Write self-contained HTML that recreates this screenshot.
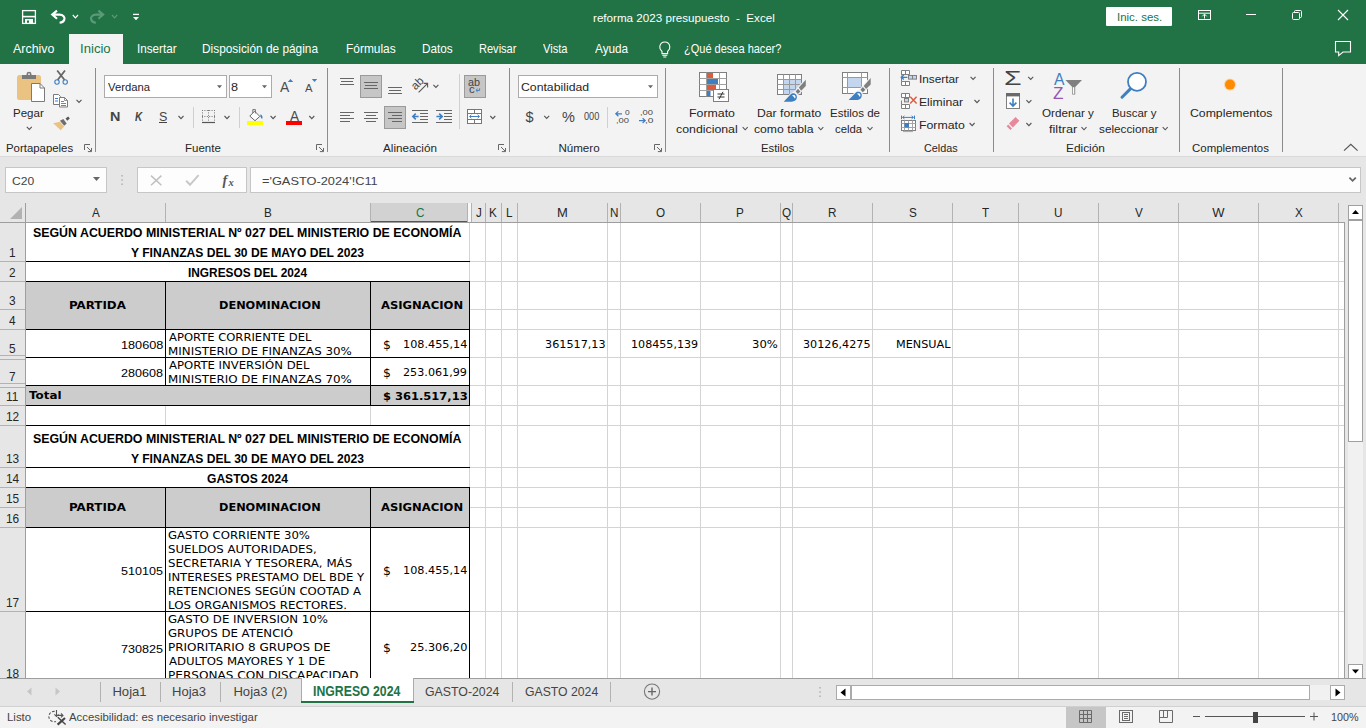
<!DOCTYPE html>
<html lang="es">
<head>
<meta charset="utf-8">
<title>reforma 2023 presupuesto - Excel</title>
<style>
html,body{margin:0;padding:0;}
body{width:1366px;height:728px;position:relative;overflow:hidden;background:#e6e6e6;font-family:"Liberation Sans",sans-serif;}
body div,body span,body svg,body b,body i,body u,body a,body button,body label{position:absolute;}
section,header,footer,main,nav{display:block;}
.t{white-space:pre;transform-origin:0 0;display:block;margin:0;padding:0;border:0;background:none;text-decoration:none;}
svg{left:0;top:0;overflow:visible;}
</style>
</head>
<body>
<header class="titlebar">
<div style="left:0px;top:0px;width:1366px;height:64px;background:#217346;"></div>
<span class="t" style="left:592.91px;top:13px;font:normal normal 11.8px/11.8px 'Liberation Sans', sans-serif;color:#ffffff;transform:scaleX(0.9864);">reforma 2023 presupuesto  -  Excel</span>
<div style="left:1106px;top:7px;width:66px;height:19px;background:#ffffff;border-radius:1px;"></div>
<span class="t" style="left:1116.53px;top:12px;font:normal normal 11.8px/11.8px 'Liberation Sans', sans-serif;color:#217346;transform:scaleX(0.9712);">Inic. ses.</span>
<svg width="1366" height="728" viewBox="0 0 1366 728" fill="none"><rect x="22.6" y="10.6" width="12.8" height="12.8" stroke="#ffffff" stroke-width="1.3"/><path d="M23,16.6 H35" stroke="#ffffff" stroke-width="1.6"/><path d="M25,19 h8 v4.6 h-4 v-3.2 h-2 v3.2 h-2 z" fill="#ffffff"/><path d="M57,10.6 L52.2,14.6 L57,18.8 M52.6,14.6 H59.5 C63.2,14.6 65,17.2 64.4,19.4 C63.8,21.6 61.8,22.6 59.6,22.8" stroke="#ffffff" stroke-width="2.1" stroke-linejoin="miter"/><path d="M72.8,15 l2.6,2.8 l2.6,-2.8" stroke="#ffffff" stroke-width="1.2" fill="none"/><path d="M98.4,10.6 L103.2,14.6 L98.4,18.8 M102.8,14.6 H96 C92.3,14.6 90.5,17.2 91.1,19.4 C91.7,21.6 93.7,22.6 95.9,22.8" stroke="#5c9977" stroke-width="2.1"/><path d="M112,15 l2.6,2.8 l2.6,-2.8" stroke="#5c9977" stroke-width="1.2" fill="none"/><path d="M133,14.4 h6" stroke="#ffffff" stroke-width="1.3"/><polygon points="133,17 139,17 136,20.2" fill="#ffffff"/><rect x="1198.5" y="10.5" width="12" height="9" stroke="#ffffff" stroke-width="1"/><path d="M1198.5,13.2 h12" stroke="#ffffff" stroke-width="1"/><path d="M1204.5,18.5 v-4 M1202.3,16.3 l2.2,-2.2 l2.2,2.2" stroke="#ffffff" stroke-width="1"/><path d="M1246,14.5 h10" stroke="#ffffff" stroke-width="1"/><rect x="1292.5" y="12.5" width="7" height="7" rx="1" stroke="#ffffff" stroke-width="1"/><path d="M1294.5,12 v-0.5 a1,1 0 0 1 1,-1 h5 a1,1 0 0 1 1,1 v5 a1,1 0 0 1 -1,1 h-0.5" stroke="#ffffff" stroke-width="1"/><path d="M1338,10 l10,10 M1348,10 l-10,10" stroke="#ffffff" stroke-width="1.1"/></svg>
</header>
<nav class="tabs">
<div style="left:69px;top:34px;width:54px;height:30px;background:#f3f3f3;"></div>
<span class="t" style="left:13.00px;top:43px;font:normal normal 12.2px/12.2px 'Liberation Sans', sans-serif;color:#ffffff;transform:scaleX(1.0200);">Archivo</span>
<span class="t" style="left:79.81px;top:43px;font:normal normal 12.2px/12.2px 'Liberation Sans', sans-serif;color:#217346;transform:scaleX(1.0782);">Inicio</span>
<span class="t" style="left:136.55px;top:43px;font:normal normal 12.2px/12.2px 'Liberation Sans', sans-serif;color:#ffffff;transform:scaleX(0.9577);">Insertar</span>
<span class="t" style="left:202.43px;top:43px;font:normal normal 12.2px/12.2px 'Liberation Sans', sans-serif;color:#ffffff;transform:scaleX(0.9731);">Disposición de página</span>
<span class="t" style="left:345.62px;top:43px;font:normal normal 12.2px/12.2px 'Liberation Sans', sans-serif;color:#ffffff;transform:scaleX(0.9789);">Fórmulas</span>
<span class="t" style="left:421.64px;top:43px;font:normal normal 12.2px/12.2px 'Liberation Sans', sans-serif;color:#ffffff;transform:scaleX(0.9649);">Datos</span>
<span class="t" style="left:478.69px;top:43px;font:normal normal 12.2px/12.2px 'Liberation Sans', sans-serif;color:#ffffff;transform:scaleX(0.9057);">Revisar</span>
<span class="t" style="left:543.00px;top:43px;font:normal normal 12.2px/12.2px 'Liberation Sans', sans-serif;color:#ffffff;transform:scaleX(0.9139);">Vista</span>
<span class="t" style="left:595.40px;top:43px;font:normal normal 12.2px/12.2px 'Liberation Sans', sans-serif;color:#ffffff;transform:scaleX(0.9655);">Ayuda</span>
<span class="t" style="left:683.97px;top:43px;font:normal normal 12.2px/12.2px 'Liberation Sans', sans-serif;color:#ffffff;transform:scaleX(0.9031);">¿Qué desea hacer?</span>
<svg width="1366" height="728" viewBox="0 0 1366 728" fill="none"><path d="M662,51.5 C660,49.5 659.6,47.5 659.8,46.5 C660.3,43.5 662.5,42 664.8,42 C667.1,42 669.3,43.5 669.8,46.5 C670,47.5 669.6,49.5 667.6,51.5 V53.6 H662 Z" stroke="#ffffff" stroke-width="1.1"/><path d="M662.3,55.3 h5 M663.3,57 h3" stroke="#ffffff" stroke-width="1"/><path d="M1335.5,41.5 h15 v10.5 h-7.5 l-4.3,3.6 v-3.6 h-3.2 z" stroke="#ffffff" stroke-width="1.1" stroke-linejoin="miter"/></svg>
</nav>
<section class="ribbon">
<div style="left:0px;top:64px;width:1366px;height:92px;background:#f3f3f3;"></div>
<div style="left:0px;top:156px;width:1366px;height:1px;background:#dadada;"></div>
<div style="left:95px;top:68px;width:1px;height:84px;background:#8c8c8c;"></div>
<div style="left:327px;top:68px;width:1px;height:84px;background:#8c8c8c;"></div>
<div style="left:509px;top:68px;width:1px;height:84px;background:#8c8c8c;"></div>
<div style="left:665px;top:68px;width:1px;height:84px;background:#8c8c8c;"></div>
<div style="left:889px;top:68px;width:1px;height:84px;background:#8c8c8c;"></div>
<div style="left:993px;top:68px;width:1px;height:84px;background:#8c8c8c;"></div>
<div style="left:1179px;top:68px;width:1px;height:84px;background:#8c8c8c;"></div>
<div style="left:1282px;top:68px;width:1px;height:84px;background:#8c8c8c;"></div>
<div style="left:193px;top:107px;width:1px;height:21px;background:#d0d0d0;"></div>
<div style="left:239px;top:107px;width:1px;height:21px;background:#d0d0d0;"></div>
<div style="left:607px;top:107px;width:1px;height:21px;background:#d0d0d0;"></div>
<div style="left:459px;top:74px;width:1px;height:55px;background:#d0d0d0;"></div>
<span class="t" style="left:5.72px;top:142px;font:normal normal 11.6px/11.6px 'Liberation Sans', sans-serif;color:#262626;transform:scaleX(0.9827);">Portapapeles</span>
<span class="t" style="left:185.11px;top:142px;font:normal normal 11.6px/11.6px 'Liberation Sans', sans-serif;color:#262626;transform:scaleX(0.9924);">Fuente</span>
<span class="t" style="left:383.40px;top:142px;font:normal normal 11.6px/11.6px 'Liberation Sans', sans-serif;color:#262626;transform:scaleX(1.0081);">Alineación</span>
<span class="t" style="left:558.40px;top:142px;font:normal normal 11.6px/11.6px 'Liberation Sans', sans-serif;color:#262626;">Número</span>
<span class="t" style="left:760.72px;top:142px;font:normal normal 11.6px/11.6px 'Liberation Sans', sans-serif;color:#262626;transform:scaleX(0.9737);">Estilos</span>
<span class="t" style="left:924.03px;top:142px;font:normal normal 11.6px/11.6px 'Liberation Sans', sans-serif;color:#262626;transform:scaleX(0.9344);">Celdas</span>
<span class="t" style="left:1066.48px;top:142px;font:normal normal 11.6px/11.6px 'Liberation Sans', sans-serif;color:#262626;transform:scaleX(1.0249);">Edición</span>
<span class="t" style="left:1191.91px;top:142px;font:normal normal 11.6px/11.6px 'Liberation Sans', sans-serif;color:#262626;transform:scaleX(0.9869);">Complementos</span>
<span class="t" style="left:13.41px;top:107px;font:normal normal 11.6px/11.6px 'Liberation Sans', sans-serif;color:#262626;transform:scaleX(0.9936);">Pegar</span>
<div style="left:104px;top:75px;width:123px;height:23px;background:#ffffff;border:1px solid #ababab;box-sizing:border-box;"></div>
<span class="t" style="left:107.60px;top:81px;font:normal normal 11.6px/11.6px 'Liberation Sans', sans-serif;color:#262626;transform:scaleX(0.9708);">Verdana</span>
<div style="left:229px;top:75px;width:43px;height:23px;background:#ffffff;border:1px solid #ababab;box-sizing:border-box;"></div>
<span class="t" style="left:231.45px;top:81px;font:normal normal 11.6px/11.6px 'Liberation Sans', sans-serif;color:#262626;transform:scaleX(1.0909);">8</span>
<span class="t" style="left:109.54px;top:111px;font:normal bold 12px/12px 'Liberation Sans', sans-serif;color:#444;transform:scaleX(1.1972);">N</span>
<span class="t" style="left:134.53px;top:111px;font:italic bold 12px/12px 'Liberation Sans', sans-serif;color:#444;transform:scaleX(0.8261);">K</span>
<span class="t" style="left:158.78px;top:111px;font:normal normal 12px/12px 'Liberation Sans', sans-serif;color:#444;transform:scaleX(1.0429);">S</span>
<div style="left:159px;top:122px;width:8px;height:1px;background:#444;"></div>
<div style="left:360px;top:75px;width:22px;height:23px;background:#c6c6c6;border:1px solid #9a9a9a;box-sizing:border-box;"></div>
<div style="left:384px;top:106px;width:22px;height:23px;background:#c6c6c6;border:1px solid #9a9a9a;box-sizing:border-box;"></div>
<div style="left:464px;top:75px;width:22px;height:23px;background:#c6c6c6;border:1px solid #9a9a9a;box-sizing:border-box;"></div>
<div style="left:518px;top:75px;width:140px;height:23px;background:#ffffff;border:1px solid #ababab;box-sizing:border-box;"></div>
<span class="t" style="left:521.17px;top:81px;font:normal normal 11.6px/11.6px 'Liberation Sans', sans-serif;color:#262626;transform:scaleX(1.0562);">Contabilidad</span>
<span class="t" style="left:525.50px;top:110px;font:normal normal 14.5px/14.5px 'Liberation Sans', sans-serif;color:#444;">$</span>
<span class="t" style="left:562.29px;top:110px;font:normal normal 14px/14px 'Liberation Sans', sans-serif;color:#444;transform:scaleX(1.0345);">%</span>
<span class="t" style="left:584.32px;top:112px;font:normal normal 10px/10px 'Liberation Sans', sans-serif;color:#444;transform:scaleX(0.9174);">000</span>
<span class="t" style="left:689.24px;top:107px;font:normal normal 11.6px/11.6px 'Liberation Sans', sans-serif;color:#262626;transform:scaleX(1.0636);">Formato</span>
<span class="t" style="left:676.27px;top:123px;font:normal normal 11.6px/11.6px 'Liberation Sans', sans-serif;color:#262626;transform:scaleX(1.0639);">condicional</span>
<span class="t" style="left:757.45px;top:107px;font:normal normal 11.6px/11.6px 'Liberation Sans', sans-serif;color:#262626;transform:scaleX(1.0503);">Dar formato</span>
<span class="t" style="left:754.18px;top:123px;font:normal normal 11.6px/11.6px 'Liberation Sans', sans-serif;color:#262626;transform:scaleX(1.0498);">como tabla</span>
<span class="t" style="left:829.60px;top:107px;font:normal normal 11.6px/11.6px 'Liberation Sans', sans-serif;color:#262626;transform:scaleX(0.9951);">Estilos de</span>
<span class="t" style="left:835.31px;top:123px;font:normal normal 11.6px/11.6px 'Liberation Sans', sans-serif;color:#262626;transform:scaleX(0.9788);">celda</span>
<span class="t" style="left:918.98px;top:73px;font:normal normal 11.6px/11.6px 'Liberation Sans', sans-serif;color:#262626;transform:scaleX(1.0167);">Insertar</span>
<span class="t" style="left:919.05px;top:96px;font:normal normal 11.6px/11.6px 'Liberation Sans', sans-serif;color:#262626;transform:scaleX(1.0506);">Eliminar</span>
<span class="t" style="left:919.04px;top:119px;font:normal normal 11.6px/11.6px 'Liberation Sans', sans-serif;color:#262626;transform:scaleX(1.0613);">Formato</span>
<span class="t" style="left:1042.10px;top:107px;font:normal normal 11.6px/11.6px 'Liberation Sans', sans-serif;color:#262626;transform:scaleX(1.0063);">Ordenar y</span>
<span class="t" style="left:1048.89px;top:123px;font:normal normal 11.6px/11.6px 'Liberation Sans', sans-serif;color:#262626;transform:scaleX(1.0974);">filtrar</span>
<span class="t" style="left:1111.51px;top:107px;font:normal normal 11.6px/11.6px 'Liberation Sans', sans-serif;color:#262626;transform:scaleX(0.9859);">Buscar y</span>
<span class="t" style="left:1098.70px;top:123px;font:normal normal 11.6px/11.6px 'Liberation Sans', sans-serif;color:#262626;transform:scaleX(1.0136);">seleccionar</span>
<span class="t" style="left:1189.77px;top:107px;font:normal normal 11.6px/11.6px 'Liberation Sans', sans-serif;color:#262626;transform:scaleX(1.0569);">Complementos</span>
<span class="t" style="left:280.40px;top:80px;font:normal normal 14.5px/14.5px 'Liberation Sans', sans-serif;color:#4c4c4c;transform:scaleX(0.9588);">A</span>
<span class="t" style="left:305.20px;top:83px;font:normal normal 11px/11px 'Liberation Sans', sans-serif;color:#4c4c4c;transform:scaleX(1.0270);">A</span>
<span class="t" style="left:289.70px;top:109px;font:normal normal 14px/14px 'Liberation Sans', sans-serif;color:#4c4c4c;transform:scaleX(0.9681);">A</span>
<span class="t" style="left:468.38px;top:78px;font:normal normal 10.4px/10.4px 'Liberation Sans', sans-serif;color:#444;transform:scaleX(1.0386);">ab</span>
<span class="t" style="left:468.77px;top:85px;font:normal normal 10.4px/10.4px 'Liberation Sans', sans-serif;color:#444;transform:scaleX(1.0870);">c</span>
<span class="t" style="left:1003.61px;top:67px;font:normal normal 21px/21px 'Liberation Sans', sans-serif;color:#444;transform:scaleX(1.3514);">Σ</span>
<span class="t" style="left:1053.50px;top:72px;font:normal normal 16px/16px 'Liberation Sans', sans-serif;color:#3f7fc1;transform:scaleX(0.9813);">A</span>
<span class="t" style="left:1053.47px;top:86px;font:normal normal 16px/16px 'Liberation Sans', sans-serif;color:#9455b5;transform:scaleX(1.0682);">Z</span>
<span class="t" style="left:717.20px;top:90px;font:normal normal 12px/12px 'Liberation Sans', sans-serif;color:#333;transform:scaleX(1.3333);">≠</span>
<span class="t" style="left:624.58px;top:109px;font:normal normal 7.6px/7.6px 'Liberation Sans', sans-serif;color:#444;transform:scaleX(1.1053);">0</span>
<span class="t" style="left:616.26px;top:117px;font:normal normal 7.6px/7.6px 'Liberation Sans', sans-serif;color:#444;transform:scaleX(1.2323);">,00</span>
<span class="t" style="left:640.26px;top:109px;font:normal normal 7.6px/7.6px 'Liberation Sans', sans-serif;color:#444;transform:scaleX(1.2323);">,00</span>
<span class="t" style="left:644.79px;top:117px;font:normal normal 7.6px/7.6px 'Liberation Sans', sans-serif;color:#444;transform:scaleX(1.3426);">,0</span>
<svg width="1366" height="728" viewBox="0 0 1366 728" fill="none"><rect x="17" y="75" width="24" height="25" rx="2.5" fill="#eac282"/><rect x="22" y="75" width="14" height="4" fill="#7a7a7a"/><path d="M26.5,75.2 v-1.2 a2.5,2.2 0 0 1 5,0 v1.2 z" fill="#7a7a7a"/><circle cx="29" cy="74.2" r="0.9" fill="#f3f3f3"/><path d="M31.5,83.5 h8.5 l4.5,4.5 v13.5 h-13 z" fill="#fff" stroke="#7a7a7a" stroke-width="1"/><path d="M40,83.5 v4.5 h4.5" stroke="#7a7a7a" stroke-width="1"/><path d="M26.8,126.8 l2.5,2.6 l2.5,-2.6" stroke="#555" stroke-width="1.1" fill="none"/><path d="M57.2,70.5 L64.6,80 M65,70.5 L57.6,80" stroke="#666" stroke-width="1.8"/><circle cx="57" cy="82" r="2.2" stroke="#3f7fc1" stroke-width="1.1"/><circle cx="65.2" cy="82" r="2.2" stroke="#3f7fc1" stroke-width="1.1"/><path d="M53.5,94.5 h5 l2,2 v8 h-7 z" fill="#fff" stroke="#7a7a7a"/><path d="M55,98.5 h3 M55,101 h3" stroke="#3f7fc1"/><path d="M59.5,97.5 h5 l3,3 v6.5 h-8 z" fill="#fff" stroke="#7a7a7a"/><path d="M64.5,97.5 v3 h3" stroke="#7a7a7a" stroke-width="0.8"/><path d="M61,101.5 h3 M61,103.5 h5 M61,105.5 h5" stroke="#3f7fc1" stroke-width="0.9"/><path d="M76.5,99.8 l2.5,2.6 l2.5,-2.6" stroke="#555" stroke-width="1.1" fill="none"/><path d="M65.6,118.6 l2.6,-2 l1.6,1.8 l-2.6,2.4 z" fill="#555"/><path d="M59.9,120.8 l3.4,-1.8 l3.4,4.6 l-2.5,2.2 z" fill="#6e6e6e"/><path d="M53.2,123.2 l6.7,-1.4 l4.3,4.6 l-3.5,3.8 z" fill="#eac282"/><path d="M84.5,150 v-5.5 h5.5" stroke="#666" stroke-width="1"/><path d="M87,147 l4.2,4.2 M91.5,148 v3.6 h-3.6" stroke="#666" stroke-width="1"/><path d="M178.5,116 l2.5,2.6 l2.5,-2.6" stroke="#555" stroke-width="1.1" fill="none"/><polygon points="217,85.3 222,85.3 219.5,88.3" fill="#666"/><polygon points="262,85.3 267,85.3 264.5,88.3" fill="#666"/><polygon points="287.8,82 293.2,82 290.5,79" fill="#3f7fc1"/><polygon points="311.8,79 317.2,79 314.5,82" fill="#3f7fc1"/><path d="M202,110.5 h13 M202,116.5 h13 M202.5,110 v11 M208.5,110 v11 M214.5,110 v11 " stroke="#777" stroke-width="1" stroke-dasharray="1 1.4"/><path d="M202,122.5 h13" stroke="#555" stroke-width="1.2"/><path d="M224.5,116 l2.5,2.6 l2.5,-2.6" stroke="#555" stroke-width="1.1" fill="none"/><rect x="247" y="121" width="16" height="4" fill="#ffff00"/><path d="M254.6,111.2 l5.2,5.2 l-4.8,4.3 l-5.2,-4.6 z" fill="#fff" stroke="#666" stroke-width="1"/><path d="M252.8,113 v-3.4 h2.6 v3.8" stroke="#666" stroke-width="0.9"/><path d="M260.5,114.2 c1.8,0.8 2.6,2.6 1.6,5 l-1.8,-2.6 z" fill="#3f7fc1"/><path d="M270.6,116 l2.5,2.6 l2.5,-2.6" stroke="#555" stroke-width="1.1" fill="none"/><rect x="286" y="121" width="16" height="4" fill="#ff0000"/><path d="M309.3,116 l2.5,2.6 l2.5,-2.6" stroke="#555" stroke-width="1.1" fill="none"/><path d="M316.5,150 v-5.5 h5.5" stroke="#666" stroke-width="1"/><path d="M319,147 l4.2,4.2 M323.5,148 v3.6 h-3.6" stroke="#666" stroke-width="1"/></svg><svg width="1366" height="728" viewBox="0 0 1366 728" fill="none"><path d="M340,78.5 H354 M341,81.5 H353 M340,84.5 H354 M364,82.5 H378 M365,85.5 H377 M364,88.5 H378 M388,87.5 H402 M389,90.5 H401 M388,93.5 H402 M340,112.5 H354 M340,115.5 H350 M340,118.5 H354 M340,121.5 H350 M364,112.5 H378 M366,115.5 H376 M364,118.5 H378 M366,121.5 H376 M388,112.5 H402 M392,115.5 H402 M388,118.5 H402 M392,121.5 H402 M412,110.5 H428 M420,113.5 H428 M420,116.5 H428 M420,119.5 H428 M412,122.5 H428 M436,110.5 H452 M444,113.5 H452 M444,116.5 H452 M444,119.5 H452 M436,122.5 H452 " stroke="#666" stroke-width="1"/><path d="M418.6,116.5 h-5.6 M415.8,113.6 l-3,2.9 l3,2.9" stroke="#3f7fc1" stroke-width="1.6"/><path d="M436.4,116.5 h5.6 M439.2,113.6 l3,2.9 l-3,2.9" stroke="#3f7fc1" stroke-width="1.6"/><text x="0" y="0" transform="translate(415.6,90.6) rotate(-45)" font-family="'Liberation Sans',sans-serif" font-size="11.5" fill="#444">ab</text><path d="M418.6,92.4 L427.4,83.6 M423.6,83.4 h4 v4" stroke="#555" stroke-width="1.1"/><path d="M433.4,84.8 l2.5,2.6 l2.5,-2.6" stroke="#555" stroke-width="1.1" fill="none"/><path d="M479.6,88.4 v2 h-3.4 M477.6,88.9 l-1.6,1.5 l1.6,1.5" stroke="#3f7fc1" stroke-width="1"/><rect x="467.5" y="109.5" width="14" height="14" fill="#fff" stroke="#777"/><path d="M467.5,113.5 h14 M467.5,119.5 h14 M474.5,109.5 v4 M474.5,119.5 v4" stroke="#777"/><path d="M469.6,116.5 h9.8 M471.4,114.8 l-1.8,1.7 l1.8,1.7 M477.6,114.8 l1.8,1.7 l-1.8,1.7" stroke="#3f7fc1" stroke-width="1"/><path d="M490.3,116 l2.5,2.6 l2.5,-2.6" stroke="#555" stroke-width="1.1" fill="none"/><path d="M498.5,150 v-5.5 h5.5" stroke="#666" stroke-width="1"/><path d="M501,147 l4.2,4.2 M505.5,148 v3.6 h-3.6" stroke="#666" stroke-width="1"/><polygon points="648,85.3 653,85.3 650.5,88.3" fill="#666"/><path d="M544.2,115.9 l2.5,2.6 l2.5,-2.6" stroke="#555" stroke-width="1.1" fill="none"/><path d="M622,113.8 h-6.2 M618.4,111.4 l-2.6,2.4 l2.6,2.4" stroke="#3f7fc1" stroke-width="1.2"/><path d="M639,120.6 h6.2 M642.6,118.2 l2.6,2.4 l-2.6,2.4" stroke="#3f7fc1" stroke-width="1.2"/><path d="M654.5,150 v-5.5 h5.5" stroke="#666" stroke-width="1"/><path d="M657,147 l4.2,4.2 M661.5,148 v3.6 h-3.6" stroke="#666" stroke-width="1"/></svg><svg width="1366" height="728" viewBox="0 0 1366 728" fill="none"><rect x="699.5" y="72.5" width="27" height="24" fill="#fff" stroke="#7f7f7f"/><path d="M706.5,72.5 v24 M719.5,72.5 v24 M699.5,78.5 h27 M699.5,84.5 h27 M699.5,90.5 h27" stroke="#a0a0a0"/><rect x="707" y="73" width="6" height="5" fill="#dc5b3e"/><rect x="707" y="79" width="11" height="5" fill="#3f7fc1"/><rect x="707" y="85" width="9" height="5" fill="#dc5b3e"/><rect x="707" y="91" width="3.5" height="5" fill="#3f7fc1"/><rect x="713.5" y="89.5" width="15" height="12" fill="#fff" stroke="#7f7f7f"/><path d="M717.5,94 h7 M717.5,97 h7 M723,91.8 l-4,7.4" stroke="#333" stroke-width="1"/><path d="M742.7,127.2 l2.5,2.6 l2.5,-2.6" stroke="#555" stroke-width="1.1" fill="none"/><rect x="777.5" y="74.5" width="24" height="20" fill="#fff" stroke="#7f7f7f"/><rect x="784" y="80" width="17" height="14" fill="#c3d6ee"/><path d="M783.5,74.5 v20 M789.5,74.5 v20 M795.5,74.5 v20 M777.5,79.5 h24 M777.5,84.5 h24 M777.5,89.5 h24" stroke="#9a9a9a"/><g transform="translate(0,0)"><path d="M805.8,79.7 V86.1 L801,91 L797.8,93.9 L796,94.4 C797.6,96.4 797,99.2 795.2,100.6 C793.8,101.6 792,101.8 790,101.8 H783.7 L790.5,94.6 L795.4,91.6 L798.6,87.7 Z" fill="#f3f3f3" stroke="#f3f3f3" stroke-width="2" stroke-linejoin="round"/><path d="M805.8,79.7 V86.1 L801.2,90.8 L798.8,87.6 Z" fill="#808080"/><path d="M795.6,91.4 L798,88.8 L800.4,91.4 L797.9,93.9 Z" fill="#7a7a7a"/><path d="M783.7,101.7 L790.5,94.6 C791.6,93.2 794.6,92.8 796,94.4 C797.6,96.4 797,99.2 795.2,100.6 C793.8,101.6 792,101.8 790,101.8 Z" fill="#3f7fc1"/><path d="M792.2,95.4 c1.3,-0.8 2.8,-0.4 3.2,0.9 c0.3,1 0,1.9 -0.5,2.4 c-0.4,-1.4 -1.4,-2.5 -2.7,-3.3 z" fill="#fff"/></g><path d="M818.3,127.2 l2.5,2.6 l2.5,-2.6" stroke="#555" stroke-width="1.1" fill="none"/><rect x="842.5" y="72.5" width="25" height="21" fill="#fff" stroke="#7f7f7f"/><path d="M847.5,72.5 v21 M861.5,72.5 v21 M842.5,77.5 h25 M842.5,87.5 h25" stroke="#9a9a9a"/><rect x="848" y="78" width="13" height="9" fill="#c3d6ee"/><g transform="translate(64.9,-1.7)"><path d="M805.8,79.7 V86.1 L801,91 L797.8,93.9 L796,94.4 C797.6,96.4 797,99.2 795.2,100.6 C793.8,101.6 792,101.8 790,101.8 H783.7 L790.5,94.6 L795.4,91.6 L798.6,87.7 Z" fill="#f3f3f3" stroke="#f3f3f3" stroke-width="2" stroke-linejoin="round"/><path d="M805.8,79.7 V86.1 L801.2,90.8 L798.8,87.6 Z" fill="#808080"/><path d="M795.6,91.4 L798,88.8 L800.4,91.4 L797.9,93.9 Z" fill="#7a7a7a"/><path d="M783.7,101.7 L790.5,94.6 C791.6,93.2 794.6,92.8 796,94.4 C797.6,96.4 797,99.2 795.2,100.6 C793.8,101.6 792,101.8 790,101.8 Z" fill="#3f7fc1"/><path d="M792.2,95.4 c1.3,-0.8 2.8,-0.4 3.2,0.9 c0.3,1 0,1.9 -0.5,2.4 c-0.4,-1.4 -1.4,-2.5 -2.7,-3.3 z" fill="#fff"/></g><path d="M867.5,127.2 l2.5,2.6 l2.5,-2.6" stroke="#555" stroke-width="1.1" fill="none"/><path d="M901.5,70.5 h8 v4 h-8 z M905.5,70.5 v4 M901.5,81.5 h8 v4 h-8 z M905.5,81.5 v4 M901.5,77.5 v4 M901.5,74.5 v1" stroke="#7f7f7f" fill="#fff"/><rect x="908.5" y="75.5" width="8" height="3.6" fill="#c3d6ee" stroke="#7f7f7f"/><path d="M912.5,75.5 v3.6" stroke="#7f7f7f"/><path d="M907.4,77.3 h-6 M903.8,75 l-2.6,2.3 l2.6,2.3" stroke="#3f7fc1" stroke-width="1.3"/><path d="M970.6,76.9 l2.5,2.6 l2.5,-2.6" stroke="#555" stroke-width="1.1" fill="none"/><path d="M901.5,93.5 h8 v4 h-8 z M905.5,93.5 v4 M901.5,104.5 h8 v4 h-8 z M905.5,104.5 v4 M901.5,100.5 v4" stroke="#7f7f7f" fill="#fff"/><rect x="904.5" y="98.5" width="4" height="3.4" fill="#c3d6ee" stroke="#7f7f7f"/><path d="M910.2,96.8 l6.4,6.8 M916.6,96.8 l-6.4,6.8" stroke="#dc5b3e" stroke-width="1.4"/><path d="M974.5,100 l2.5,2.6 l2.5,-2.6" stroke="#555" stroke-width="1.1" fill="none"/><path d="M901.5,115.6 v3.6 M914.5,115.6 v3.6 M902.6,117.4 h10.8 M904.4,115.9 l-1.8,1.5 l1.8,1.5 M911.6,115.9 l1.8,1.5 l-1.8,1.5" stroke="#3f7fc1" stroke-width="1"/><rect x="901.5" y="120.5" width="14" height="10" fill="#fff" stroke="#7f7f7f"/><path d="M901.5,123.5 h14 M901.5,127.5 h14 M904.5,120.5 v10 M908.5,120.5 v10 M912.5,120.5 v10" stroke="#a6a6a6"/><rect x="904.5" y="123" width="4.5" height="4.5" fill="#3f7fc1"/><path d="M903,131.6 h10" stroke="#a6a6a6"/><path d="M969.6,123 l2.5,2.6 l2.5,-2.6" stroke="#555" stroke-width="1.1" fill="none"/><path d="M1028.2,76.9 l2.5,2.6 l2.5,-2.6" stroke="#555" stroke-width="1.1" fill="none"/><path d="M1026.4,100.1 l2.5,2.6 l2.5,-2.6" stroke="#555" stroke-width="1.1" fill="none"/><path d="M1026.4,123 l2.5,2.6 l2.5,-2.6" stroke="#555" stroke-width="1.1" fill="none"/><rect x="1006.5" y="93.5" width="13" height="15" fill="#fff" stroke="#7f7f7f"/><rect x="1006" y="93" width="14" height="3.4" fill="#6a6a6a"/><path d="M1013,98.4 v7.4 M1009.6,102.6 l3.4,3.4 l3.4,-3.4" stroke="#3f7fc1" stroke-width="1.6"/><path d="M1015.6,117 l3.8,3.8 l-6.6,6.6 l-3.8,-3.8 z" fill="#e8889b"/><path d="M1008.2,124.6 l3.8,3.8 l-1.6,1.6 l-3.8,-3.8 z" fill="#e8889b"/><path d="M1065.4,80 h16.6 l-6.8,7 v7.6 h-3 v-7.6 z" fill="#808080"/><rect x="1072.9" y="87.2" width="1.4" height="6.6" fill="#fff"/><path d="M1081.5,127.2 l2.5,2.6 l2.5,-2.6" stroke="#555" stroke-width="1.1" fill="none"/><path d="M1130.6,88.6 L1122,97.2" stroke="#3f7fc1" stroke-width="3" stroke-linecap="round"/><circle cx="1137" cy="81.8" r="9" fill="#fff" stroke="#3f7fc1" stroke-width="1.8"/><path d="M1162.7,127.2 l2.5,2.6 l2.5,-2.6" stroke="#555" stroke-width="1.1" fill="none"/><circle cx="1230" cy="84.6" r="5" fill="#ff8c00"/><circle cx="1230" cy="84.6" r="6.2" fill="#ff8c00" opacity="0.25"/><path d="M1344,150.6 l6.8,-6.4 l6.8,6.4" stroke="#555" stroke-width="1.2"/></svg>
</section>
<section class="formulabar">
<div style="left:5px;top:167px;width:102px;height:26px;background:#fdfdfd;border:1px solid #c6c6c6;box-sizing:border-box;"></div>
<span class="t" style="left:11.79px;top:176px;font:normal normal 11.8px/11.8px 'Liberation Sans', sans-serif;color:#444;transform:scaleX(1.0249);">C20</span>
<div style="left:137px;top:167px;width:110px;height:26px;background:#fdfdfd;border:1px solid #c6c6c6;box-sizing:border-box;"></div>
<div style="left:250px;top:167px;width:1111px;height:26px;background:#fdfdfd;border:1px solid #c6c6c6;box-sizing:border-box;"></div>
<span class="t" style="left:261.86px;top:176px;font:normal normal 11.8px/11.8px 'Liberation Sans', sans-serif;color:#444;transform:scaleX(1.0847);">=&#x27;GASTO-2024&#x27;!C11</span>
<span class="t" style="left:222.60px;top:174px;font:italic bold 14px/14px 'Liberation Serif', serif;color:#555;">f</span>
<span class="t" style="left:228.40px;top:178px;font:italic bold 10.5px/10.5px 'Liberation Serif', serif;color:#555;">x</span>
<svg width="1366" height="728" viewBox="0 0 1366 728" fill="none"><polygon points="93,177 100,177 96.5,181" fill="#666"/><path d="M121.3,175 h1.6 v1.6 h-1.6 z M121.3,179.2 h1.6 v1.6 h-1.6 z M121.3,183.4 h1.6 v1.6 h-1.6 z" fill="#b4b4b4"/><path d="M151,175.6 l10.4,9.6 M161.4,175.6 l-10.4,9.6" stroke="#c0c0c0" stroke-width="1.5"/><path d="M186.2,180.8 l3.8,4 l8.6,-9.6" stroke="#c8c8c8" stroke-width="2"/><path d="M1349.4,177.6 l3.2,3.2 l3.2,-3.2" stroke="#666" stroke-width="1.8"/></svg>
</section>
<main class="grid">
<div style="left:26px;top:223px;width:1318px;height:455px;background:#ffffff;"></div>
<div style="left:469px;top:223px;width:1px;height:455px;background:#d4d4d4;"></div>
<div style="left:485px;top:223px;width:1px;height:455px;background:#d4d4d4;"></div>
<div style="left:501px;top:223px;width:1px;height:455px;background:#d4d4d4;"></div>
<div style="left:517px;top:223px;width:1px;height:455px;background:#d4d4d4;"></div>
<div style="left:607px;top:223px;width:1px;height:455px;background:#d4d4d4;"></div>
<div style="left:620px;top:223px;width:1px;height:455px;background:#d4d4d4;"></div>
<div style="left:700px;top:223px;width:1px;height:455px;background:#d4d4d4;"></div>
<div style="left:780px;top:223px;width:1px;height:455px;background:#d4d4d4;"></div>
<div style="left:792px;top:223px;width:1px;height:455px;background:#d4d4d4;"></div>
<div style="left:872px;top:223px;width:1px;height:455px;background:#d4d4d4;"></div>
<div style="left:952px;top:223px;width:1px;height:455px;background:#d4d4d4;"></div>
<div style="left:1018px;top:223px;width:1px;height:455px;background:#d4d4d4;"></div>
<div style="left:1098px;top:223px;width:1px;height:455px;background:#d4d4d4;"></div>
<div style="left:1178px;top:223px;width:1px;height:455px;background:#d4d4d4;"></div>
<div style="left:1258px;top:223px;width:1px;height:455px;background:#d4d4d4;"></div>
<div style="left:1338px;top:223px;width:1px;height:455px;background:#d4d4d4;"></div>
<div style="left:470px;top:261px;width:874px;height:1px;background:#d4d4d4;"></div>
<div style="left:470px;top:281px;width:874px;height:1px;background:#d4d4d4;"></div>
<div style="left:470px;top:309px;width:874px;height:1px;background:#d4d4d4;"></div>
<div style="left:470px;top:329px;width:874px;height:1px;background:#d4d4d4;"></div>
<div style="left:470px;top:357px;width:874px;height:1px;background:#d4d4d4;"></div>
<div style="left:470px;top:385px;width:874px;height:1px;background:#d4d4d4;"></div>
<div style="left:470px;top:405px;width:874px;height:1px;background:#d4d4d4;"></div>
<div style="left:470px;top:425px;width:874px;height:1px;background:#d4d4d4;"></div>
<div style="left:470px;top:467px;width:874px;height:1px;background:#d4d4d4;"></div>
<div style="left:470px;top:487px;width:874px;height:1px;background:#d4d4d4;"></div>
<div style="left:470px;top:507px;width:874px;height:1px;background:#d4d4d4;"></div>
<div style="left:470px;top:527px;width:874px;height:1px;background:#d4d4d4;"></div>
<div style="left:470px;top:611px;width:874px;height:1px;background:#d4d4d4;"></div>
<div style="left:165px;top:406px;width:1px;height:19px;background:#d4d4d4;"></div>
<div style="left:370px;top:406px;width:1px;height:19px;background:#d4d4d4;"></div>
<div style="left:26px;top:282px;width:443px;height:47px;background:#cccccc;"></div>
<div style="left:26px;top:386px;width:443px;height:19px;background:#cccccc;"></div>
<div style="left:26px;top:488px;width:443px;height:39px;background:#cccccc;"></div>
<div style="left:26px;top:261px;width:444px;height:1px;background:#000000;"></div>
<div style="left:26px;top:281px;width:444px;height:1px;background:#000000;"></div>
<div style="left:26px;top:329px;width:444px;height:1px;background:#000000;"></div>
<div style="left:26px;top:357px;width:444px;height:1px;background:#000000;"></div>
<div style="left:26px;top:385px;width:444px;height:1px;background:#000000;"></div>
<div style="left:26px;top:405px;width:444px;height:1px;background:#000000;"></div>
<div style="left:26px;top:425px;width:444px;height:1px;background:#000000;"></div>
<div style="left:26px;top:467px;width:444px;height:1px;background:#000000;"></div>
<div style="left:26px;top:487px;width:444px;height:1px;background:#000000;"></div>
<div style="left:26px;top:527px;width:444px;height:1px;background:#000000;"></div>
<div style="left:26px;top:611px;width:444px;height:1px;background:#000000;"></div>
<div style="left:165px;top:281px;width:1px;height:105px;background:#000000;"></div>
<div style="left:165px;top:487px;width:1px;height:191px;background:#000000;"></div>
<div style="left:370px;top:281px;width:1px;height:125px;background:#000000;"></div>
<div style="left:370px;top:487px;width:1px;height:191px;background:#000000;"></div>
<div style="left:469px;top:281px;width:1px;height:125px;background:#000000;"></div>
<div style="left:469px;top:487px;width:1px;height:191px;background:#000000;"></div>
<div style="left:370px;top:385px;width:1px;height:21px;background:#000000;"></div>
<div style="left:0px;top:203px;width:1344px;height:19px;background:#e6e6e6;"></div>
<div style="left:371px;top:203px;width:97px;height:18px;background:#d2d2d2;"></div>
<div style="left:371px;top:221px;width:97px;height:2px;background:#217346;"></div>
<div style="left:0px;top:222px;width:1345px;height:1px;background:#9e9e9e;"></div>
<div style="left:25px;top:203px;width:1px;height:475px;background:#9e9e9e;"></div>
<div style="left:1344px;top:222px;width:1px;height:457px;background:#9e9e9e;"></div>
<div style="left:0px;top:223px;width:25px;height:455px;background:#e6e6e6;"></div>
<div style="left:165px;top:203px;width:1px;height:19px;background:#b2b2b2;"></div>
<span class="t" style="left:91.58px;top:206px;font:normal normal 13px/13px 'Liberation Sans', sans-serif;color:#262626;transform:scaleX(0.9000);">A</span>
<div style="left:370px;top:203px;width:1px;height:19px;background:#b2b2b2;"></div>
<span class="t" style="left:263.95px;top:206px;font:normal normal 13px/13px 'Liberation Sans', sans-serif;color:#262626;transform:scaleX(0.9000);">B</span>
<div style="left:467px;top:203px;width:1px;height:19px;background:#b2b2b2;"></div>
<div style="left:468px;top:203px;width:3px;height:19px;background:#f8f8f8;"></div>
<div style="left:471px;top:203px;width:1px;height:19px;background:#b2b2b2;"></div>
<span class="t" style="left:415.73px;top:206px;font:normal normal 13px/13px 'Liberation Sans', sans-serif;color:#217346;transform:scaleX(0.9000);">C</span>
<div style="left:485px;top:203px;width:1px;height:19px;background:#b2b2b2;"></div>
<span class="t" style="left:475.89px;top:206px;font:normal normal 13px/13px 'Liberation Sans', sans-serif;color:#262626;transform:scaleX(0.9000);">J</span>
<div style="left:501px;top:203px;width:1px;height:19px;background:#b2b2b2;"></div>
<span class="t" style="left:489.18px;top:206px;font:normal normal 13px/13px 'Liberation Sans', sans-serif;color:#262626;transform:scaleX(0.9000);">K</span>
<div style="left:517px;top:203px;width:1px;height:19px;background:#b2b2b2;"></div>
<span class="t" style="left:505.99px;top:206px;font:normal normal 13px/13px 'Liberation Sans', sans-serif;color:#262626;transform:scaleX(0.9000);">L</span>
<div style="left:607px;top:203px;width:1px;height:19px;background:#b2b2b2;"></div>
<span class="t" style="left:557.10px;top:206px;font:normal normal 13px/13px 'Liberation Sans', sans-serif;color:#262626;">M</span>
<div style="left:620px;top:203px;width:1px;height:19px;background:#b2b2b2;"></div>
<span class="t" style="left:609.77px;top:206px;font:normal normal 13px/13px 'Liberation Sans', sans-serif;color:#262626;transform:scaleX(0.9000);">N</span>
<div style="left:700px;top:203px;width:1px;height:19px;background:#b2b2b2;"></div>
<span class="t" style="left:655.96px;top:206px;font:normal normal 13px/13px 'Liberation Sans', sans-serif;color:#262626;transform:scaleX(0.9000);">O</span>
<div style="left:780px;top:203px;width:1px;height:19px;background:#b2b2b2;"></div>
<span class="t" style="left:736.45px;top:206px;font:normal normal 13px/13px 'Liberation Sans', sans-serif;color:#262626;transform:scaleX(0.9000);">P</span>
<div style="left:792px;top:203px;width:1px;height:19px;background:#b2b2b2;"></div>
<span class="t" style="left:781.96px;top:206px;font:normal normal 13px/13px 'Liberation Sans', sans-serif;color:#262626;transform:scaleX(0.9000);">Q</span>
<div style="left:872px;top:203px;width:1px;height:19px;background:#b2b2b2;"></div>
<span class="t" style="left:828.09px;top:206px;font:normal normal 13px/13px 'Liberation Sans', sans-serif;color:#262626;transform:scaleX(0.9000);">R</span>
<div style="left:952px;top:203px;width:1px;height:19px;background:#b2b2b2;"></div>
<span class="t" style="left:908.63px;top:206px;font:normal normal 13px/13px 'Liberation Sans', sans-serif;color:#262626;transform:scaleX(0.9000);">S</span>
<div style="left:1018px;top:203px;width:1px;height:19px;background:#b2b2b2;"></div>
<span class="t" style="left:981.95px;top:206px;font:normal normal 13px/13px 'Liberation Sans', sans-serif;color:#262626;transform:scaleX(0.9000);">T</span>
<div style="left:1098px;top:203px;width:1px;height:19px;background:#b2b2b2;"></div>
<span class="t" style="left:1054.27px;top:206px;font:normal normal 13px/13px 'Liberation Sans', sans-serif;color:#262626;transform:scaleX(0.9000);">U</span>
<div style="left:1178px;top:203px;width:1px;height:19px;background:#b2b2b2;"></div>
<span class="t" style="left:1134.59px;top:206px;font:normal normal 13px/13px 'Liberation Sans', sans-serif;color:#262626;transform:scaleX(0.9000);">V</span>
<div style="left:1258px;top:203px;width:1px;height:19px;background:#b2b2b2;"></div>
<span class="t" style="left:1212.35px;top:206px;font:normal normal 13px/13px 'Liberation Sans', sans-serif;color:#262626;">W</span>
<div style="left:1338px;top:203px;width:1px;height:19px;background:#b2b2b2;"></div>
<span class="t" style="left:1294.63px;top:206px;font:normal normal 13px/13px 'Liberation Sans', sans-serif;color:#262626;transform:scaleX(0.9000);">X</span>
<div style="left:0px;top:261px;width:25px;height:1px;background:#b2b2b2;"></div>
<span class="t" style="left:9.05px;top:247px;font:normal normal 12.9px/12.9px 'Liberation Sans', sans-serif;color:#262626;transform:scaleX(0.9200);">1</span>
<div style="left:0px;top:281px;width:25px;height:1px;background:#b2b2b2;"></div>
<span class="t" style="left:9.19px;top:267px;font:normal normal 12.9px/12.9px 'Liberation Sans', sans-serif;color:#262626;transform:scaleX(0.9200);">2</span>
<div style="left:0px;top:309px;width:25px;height:1px;background:#b2b2b2;"></div>
<span class="t" style="left:9.23px;top:295px;font:normal normal 12.9px/12.9px 'Liberation Sans', sans-serif;color:#262626;transform:scaleX(0.9200);">3</span>
<div style="left:0px;top:329px;width:25px;height:1px;background:#b2b2b2;"></div>
<span class="t" style="left:9.28px;top:315px;font:normal normal 12.9px/12.9px 'Liberation Sans', sans-serif;color:#262626;transform:scaleX(0.9200);">4</span>
<div style="left:0px;top:355px;width:25px;height:1px;background:#b2b2b2;"></div>
<div style="left:0px;top:359px;width:25px;height:1px;background:#b2b2b2;"></div>
<span class="t" style="left:9.19px;top:343px;font:normal normal 12.9px/12.9px 'Liberation Sans', sans-serif;color:#262626;transform:scaleX(0.9200);">5</span>
<div style="left:0px;top:383px;width:25px;height:1px;background:#b2b2b2;"></div>
<div style="left:0px;top:387px;width:25px;height:1px;background:#b2b2b2;"></div>
<span class="t" style="left:9.19px;top:371px;font:normal normal 12.9px/12.9px 'Liberation Sans', sans-serif;color:#262626;transform:scaleX(0.9200);">7</span>
<div style="left:0px;top:405px;width:25px;height:1px;background:#b2b2b2;"></div>
<span class="t" style="left:6.19px;top:391px;font:normal normal 12.9px/12.9px 'Liberation Sans', sans-serif;color:#262626;transform:scaleX(0.9200);">11</span>
<div style="left:0px;top:425px;width:25px;height:1px;background:#b2b2b2;"></div>
<span class="t" style="left:5.75px;top:411px;font:normal normal 12.9px/12.9px 'Liberation Sans', sans-serif;color:#262626;transform:scaleX(0.9200);">12</span>
<div style="left:0px;top:467px;width:25px;height:1px;background:#b2b2b2;"></div>
<span class="t" style="left:5.70px;top:453px;font:normal normal 12.9px/12.9px 'Liberation Sans', sans-serif;color:#262626;transform:scaleX(0.9200);">13</span>
<div style="left:0px;top:487px;width:25px;height:1px;background:#b2b2b2;"></div>
<span class="t" style="left:5.66px;top:473px;font:normal normal 12.9px/12.9px 'Liberation Sans', sans-serif;color:#262626;transform:scaleX(0.9200);">14</span>
<div style="left:0px;top:507px;width:25px;height:1px;background:#b2b2b2;"></div>
<span class="t" style="left:5.70px;top:493px;font:normal normal 12.9px/12.9px 'Liberation Sans', sans-serif;color:#262626;transform:scaleX(0.9200);">15</span>
<div style="left:0px;top:527px;width:25px;height:1px;background:#b2b2b2;"></div>
<span class="t" style="left:5.70px;top:513px;font:normal normal 12.9px/12.9px 'Liberation Sans', sans-serif;color:#262626;transform:scaleX(0.9200);">16</span>
<div style="left:0px;top:611px;width:25px;height:1px;background:#b2b2b2;"></div>
<span class="t" style="left:5.75px;top:597px;font:normal normal 12.9px/12.9px 'Liberation Sans', sans-serif;color:#262626;transform:scaleX(0.9200);">17</span>
<span class="t" style="left:5.70px;top:668px;font:normal normal 12.9px/12.9px 'Liberation Sans', sans-serif;color:#262626;transform:scaleX(0.9200);">18</span>
<svg width="1366" height="728" viewBox="0 0 1366 728"><polygon points="22,207 22,219 10,219" fill="#b2b2b2"/></svg>
<span class="t" style="left:32.70px;top:227px;font:normal bold 12.5px/12.5px 'Liberation Sans', sans-serif;color:#000000;transform:scaleX(0.9895);">SEGÚN ACUERDO MINISTERIAL Nº 027 DEL MINISTERIO DE ECONOMÍA</span>
<span class="t" style="left:131.41px;top:247px;font:normal bold 12.5px/12.5px 'Liberation Sans', sans-serif;color:#000000;transform:scaleX(0.9684);">Y FINANZAS DEL 30 DE MAYO DEL 2023</span>
<span class="t" style="left:187.84px;top:267px;font:normal bold 12.5px/12.5px 'Liberation Sans', sans-serif;color:#000000;transform:scaleX(0.9481);">INGRESOS DEL 2024</span>
<span class="t" style="left:32.70px;top:433px;font:normal bold 12.5px/12.5px 'Liberation Sans', sans-serif;color:#000000;transform:scaleX(0.9895);">SEGÚN ACUERDO MINISTERIAL Nº 027 DEL MINISTERIO DE ECONOMÍA</span>
<span class="t" style="left:131.41px;top:453px;font:normal bold 12.5px/12.5px 'Liberation Sans', sans-serif;color:#000000;transform:scaleX(0.9684);">Y FINANZAS DEL 30 DE MAYO DEL 2023</span>
<span class="t" style="left:207.12px;top:473px;font:normal bold 12.5px/12.5px 'Liberation Sans', sans-serif;color:#000000;transform:scaleX(0.9653);">GASTOS 2024</span>
<span class="t" style="left:68.60px;top:301px;font:normal bold 10.67px/10.67px 'DejaVu Sans', 'Liberation Sans', sans-serif;color:#000000;transform:scaleX(1.1125);">PARTIDA</span>
<span class="t" style="left:218.64px;top:301px;font:normal bold 10.67px/10.67px 'DejaVu Sans', 'Liberation Sans', sans-serif;color:#000000;transform:scaleX(1.0630);">DENOMINACION</span>
<span class="t" style="left:381.40px;top:301px;font:normal bold 10.67px/10.67px 'DejaVu Sans', 'Liberation Sans', sans-serif;color:#000000;transform:scaleX(1.0867);">ASIGNACION</span>
<span class="t" style="left:68.60px;top:503px;font:normal bold 10.67px/10.67px 'DejaVu Sans', 'Liberation Sans', sans-serif;color:#000000;transform:scaleX(1.1125);">PARTIDA</span>
<span class="t" style="left:218.64px;top:503px;font:normal bold 10.67px/10.67px 'DejaVu Sans', 'Liberation Sans', sans-serif;color:#000000;transform:scaleX(1.0630);">DENOMINACION</span>
<span class="t" style="left:381.40px;top:503px;font:normal bold 10.67px/10.67px 'DejaVu Sans', 'Liberation Sans', sans-serif;color:#000000;transform:scaleX(1.0867);">ASIGNACION</span>
<span class="t" style="left:120.74px;top:340px;font:normal normal 11.8px/11.8px 'Liberation Sans', sans-serif;color:#000000;transform:scaleX(1.0757);">180608</span>
<span class="t" style="left:121.07px;top:368px;font:normal normal 11.8px/11.8px 'Liberation Sans', sans-serif;color:#000000;transform:scaleX(1.0673);">280608</span>
<span class="t" style="left:121.17px;top:566px;font:normal normal 11.8px/11.8px 'Liberation Sans', sans-serif;color:#000000;transform:scaleX(1.0646);">510105</span>
<span class="t" style="left:120.96px;top:644px;font:normal normal 11.8px/11.8px 'Liberation Sans', sans-serif;color:#000000;transform:scaleX(1.0701);">730825</span>
<span class="t" style="left:169.00px;top:333px;font:normal normal 10.67px/10.67px 'DejaVu Sans', 'Liberation Sans', sans-serif;color:#000000;transform:scaleX(1.0847);">APORTE CORRIENTE DEL</span>
<span class="t" style="left:167.89px;top:347px;font:normal normal 10.67px/10.67px 'DejaVu Sans', 'Liberation Sans', sans-serif;color:#000000;transform:scaleX(1.1143);">MINISTERIO DE FINANZAS 30%</span>
<span class="t" style="left:169.00px;top:361px;font:normal normal 10.67px/10.67px 'DejaVu Sans', 'Liberation Sans', sans-serif;color:#000000;transform:scaleX(1.0938);">APORTE INVERSIÓN DEL</span>
<span class="t" style="left:167.89px;top:375px;font:normal normal 10.67px/10.67px 'DejaVu Sans', 'Liberation Sans', sans-serif;color:#000000;transform:scaleX(1.1143);">MINISTERIO DE FINANZAS 70%</span>
<span class="t" style="left:168.45px;top:531px;font:normal normal 10.67px/10.67px 'DejaVu Sans', 'Liberation Sans', sans-serif;color:#000000;transform:scaleX(1.0972);">GASTO CORRIENTE 30%</span>
<span class="t" style="left:168.23px;top:545px;font:normal normal 10.67px/10.67px 'DejaVu Sans', 'Liberation Sans', sans-serif;color:#000000;transform:scaleX(1.1021);">SUELDOS AUTORIDADES,</span>
<span class="t" style="left:168.22px;top:559px;font:normal normal 10.67px/10.67px 'DejaVu Sans', 'Liberation Sans', sans-serif;color:#000000;transform:scaleX(1.1097);">SECRETARIA Y TESORERA, MÁS</span>
<span class="t" style="left:167.91px;top:573px;font:normal normal 10.67px/10.67px 'DejaVu Sans', 'Liberation Sans', sans-serif;color:#000000;transform:scaleX(1.0909);">INTERESES PRESTAMO DEL BDE Y</span>
<span class="t" style="left:167.91px;top:587px;font:normal normal 10.67px/10.67px 'DejaVu Sans', 'Liberation Sans', sans-serif;color:#000000;transform:scaleX(1.0948);">RETENCIONES SEGÚN COOTAD A</span>
<span class="t" style="left:167.89px;top:601px;font:normal normal 10.67px/10.67px 'DejaVu Sans', 'Liberation Sans', sans-serif;color:#000000;transform:scaleX(1.1069);">LOS ORGANISMOS RECTORES.</span>
<span class="t" style="left:168.45px;top:615px;font:normal normal 10.67px/10.67px 'DejaVu Sans', 'Liberation Sans', sans-serif;color:#000000;transform:scaleX(1.1047);">GASTO DE INVERSION 10%</span>
<span class="t" style="left:168.45px;top:629px;font:normal normal 10.67px/10.67px 'DejaVu Sans', 'Liberation Sans', sans-serif;color:#000000;transform:scaleX(1.1029);">GRUPOS DE ATENCIÓ</span>
<span class="t" style="left:167.88px;top:643px;font:normal normal 10.67px/10.67px 'DejaVu Sans', 'Liberation Sans', sans-serif;color:#000000;transform:scaleX(1.1238);">PRIORITARIO 8 GRUPOS DE</span>
<span class="t" style="left:169.00px;top:657px;font:normal normal 10.67px/10.67px 'DejaVu Sans', 'Liberation Sans', sans-serif;color:#000000;transform:scaleX(1.0982);">ADULTOS MAYORES Y 1 DE</span>
<span class="t" style="left:167.87px;top:671px;font:normal normal 10.67px/10.67px 'DejaVu Sans', 'Liberation Sans', sans-serif;color:#000000;transform:scaleX(1.1339);">PERSONAS CON DISCAPACIDAD</span>
<span class="t" style="left:383.44px;top:340px;font:normal normal 11.6px/11.6px 'DejaVu Sans', 'Liberation Sans', sans-serif;color:#000000;transform:scaleX(1.0714);">$</span>
<span class="t" style="left:402.84px;top:340px;font:normal normal 10.67px/10.67px 'DejaVu Sans', 'Liberation Sans', sans-serif;color:#000000;transform:scaleX(1.0539);">108.455,14</span>
<span class="t" style="left:383.44px;top:368px;font:normal normal 11.6px/11.6px 'DejaVu Sans', 'Liberation Sans', sans-serif;color:#000000;transform:scaleX(1.0714);">$</span>
<span class="t" style="left:403.27px;top:368px;font:normal normal 10.67px/10.67px 'DejaVu Sans', 'Liberation Sans', sans-serif;color:#000000;transform:scaleX(1.0486);">253.061,99</span>
<span class="t" style="left:383.44px;top:566px;font:normal normal 11.6px/11.6px 'DejaVu Sans', 'Liberation Sans', sans-serif;color:#000000;transform:scaleX(1.0714);">$</span>
<span class="t" style="left:402.84px;top:566px;font:normal normal 10.67px/10.67px 'DejaVu Sans', 'Liberation Sans', sans-serif;color:#000000;transform:scaleX(1.0539);">108.455,14</span>
<span class="t" style="left:383.44px;top:643px;font:normal normal 11.6px/11.6px 'DejaVu Sans', 'Liberation Sans', sans-serif;color:#000000;transform:scaleX(1.0714);">$</span>
<span class="t" style="left:409.86px;top:643px;font:normal normal 10.67px/10.67px 'DejaVu Sans', 'Liberation Sans', sans-serif;color:#000000;transform:scaleX(1.0584);">25.306,20</span>
<span class="t" style="left:29.00px;top:391px;font:normal bold 10.67px/10.67px 'DejaVu Sans', 'Liberation Sans', sans-serif;color:#000000;transform:scaleX(1.1170);">Total</span>
<span class="t" style="left:382.74px;top:392px;font:normal bold 10.67px/10.67px 'DejaVu Sans', 'Liberation Sans', sans-serif;color:#000000;transform:scaleX(1.0778);">$ 361.517,13</span>
<span class="t" style="left:544.76px;top:340px;font:normal normal 10.67px/10.67px 'DejaVu Sans', 'Liberation Sans', sans-serif;color:#000000;transform:scaleX(1.0516);">361517,13</span>
<span class="t" style="left:630.85px;top:340px;font:normal normal 10.67px/10.67px 'DejaVu Sans', 'Liberation Sans', sans-serif;color:#000000;transform:scaleX(1.0432);">108455,139</span>
<span class="t" style="left:752.13px;top:340px;font:normal normal 10.67px/10.67px 'DejaVu Sans', 'Liberation Sans', sans-serif;color:#000000;transform:scaleX(1.0905);">30%</span>
<span class="t" style="left:802.76px;top:340px;font:normal normal 10.67px/10.67px 'DejaVu Sans', 'Liberation Sans', sans-serif;color:#000000;transform:scaleX(1.0479);">30126,4275</span>
<span class="t" style="left:895.55px;top:340px;font:normal normal 10.67px/10.67px 'DejaVu Sans', 'Liberation Sans', sans-serif;color:#000000;transform:scaleX(1.0531);">MENSUAL</span>
<div style="left:1345px;top:203px;width:21px;height:476px;background:#e6e6e6;"></div>
<div style="left:1348px;top:205px;width:15px;height:15px;background:#ffffff;border:1px solid #a0a0a0;box-sizing:border-box;"></div>
<div style="left:1348px;top:220px;width:15px;height:222px;background:#ffffff;border:1px solid #a0a0a0;box-sizing:border-box;"></div>
<div style="left:1348px;top:442px;width:15px;height:222px;background:#f1f1f1;"></div>
<div style="left:1348px;top:664px;width:15px;height:15px;background:#ffffff;border:1px solid #a0a0a0;box-sizing:border-box;"></div>
<svg width="1366" height="728" viewBox="0 0 1366 728" fill="none"><polygon points="1352,214 1359,214 1355.5,210" fill="#000"/><polygon points="1352,669.5 1359,669.5 1355.5,673.5" fill="#000"/></svg>
</main>
<nav class="sheettabs">
<div style="left:0px;top:678px;width:1366px;height:29px;background:#e6e6e6;"></div>
<div style="left:0px;top:678px;width:1366px;height:1px;background:#9e9e9e;"></div>
<div style="left:301px;top:678px;width:113px;height:25px;background:#ffffff;border:1px solid #ababab;box-sizing:border-box;border-top:0;border-bottom:0;"></div>
<div style="left:301px;top:701px;width:113px;height:2px;background:#217346;"></div>
<div style="left:100px;top:682px;width:1px;height:20px;background:#b2b2b2;"></div>
<div style="left:160px;top:682px;width:1px;height:20px;background:#b2b2b2;"></div>
<div style="left:220px;top:682px;width:1px;height:20px;background:#b2b2b2;"></div>
<div style="left:512px;top:682px;width:1px;height:20px;background:#b2b2b2;"></div>
<div style="left:610px;top:682px;width:1px;height:20px;background:#b2b2b2;"></div>
<span class="t" style="left:112.40px;top:685px;font:normal normal 13.1px/13.1px 'Liberation Sans', sans-serif;color:#444;">Hoja1</span>
<span class="t" style="left:172.40px;top:685px;font:normal normal 13.1px/13.1px 'Liberation Sans', sans-serif;color:#444;transform:scaleX(0.9957);">Hoja3</span>
<span class="t" style="left:233.40px;top:685px;font:normal normal 13.1px/13.1px 'Liberation Sans', sans-serif;color:#444;">Hoja3 (2)</span>
<span class="t" style="left:424.84px;top:685px;font:normal normal 13.1px/13.1px 'Liberation Sans', sans-serif;color:#444;transform:scaleX(0.9407);">GASTO-2024</span>
<span class="t" style="left:525.04px;top:685px;font:normal normal 13.1px/13.1px 'Liberation Sans', sans-serif;color:#444;transform:scaleX(0.9340);">GASTO 2024</span>
<span class="t" style="left:312.60px;top:685px;font:normal bold 13.8px/13.8px 'Liberation Sans', sans-serif;color:#217346;transform:scaleX(0.8900);">INGRESO 2024</span>
<div style="left:836px;top:685px;width:15px;height:15px;background:#ffffff;border:1px solid #ababab;box-sizing:border-box;"></div>
<div style="left:851px;top:685px;width:459px;height:15px;background:#ffffff;border:1px solid #ababab;box-sizing:border-box;"></div>
<div style="left:1310px;top:685px;width:20px;height:15px;background:#f1f1f1;"></div>
<div style="left:1330px;top:685px;width:15px;height:15px;background:#ffffff;border:1px solid #ababab;box-sizing:border-box;"></div>
<svg width="1366" height="728" viewBox="0 0 1366 728" fill="none"><polygon points="31.5,687.5 31.5,695.5 27,691.5" fill="#c6c6c6"/><polygon points="55.5,687.5 55.5,695.5 60,691.5" fill="#c6c6c6"/><circle cx="652" cy="691.6" r="7.6" stroke="#777" stroke-width="1.1"/><path d="M648,691.6 h8 M652,687.6 v8" stroke="#666" stroke-width="1.4"/><path d="M819.3,687 h1.6 v1.6 h-1.6 z M819.3,691.2 h1.6 v1.6 h-1.6 z M819.3,695.4 h1.6 v1.6 h-1.6 z" fill="#b4b4b4"/><polygon points="845.5,688.5 845.5,696.5 840.5,692.5" fill="#000"/><polygon points="1335.5,688.5 1335.5,696.5 1340.5,692.5" fill="#000"/></svg>
</nav>
<footer class="statusbar">
<div style="left:0px;top:706px;width:1366px;height:22px;background:#f3f3f3;"></div>
<div style="left:0px;top:706px;width:1366px;height:1px;background:#d0d0d0;"></div>
<span class="t" style="left:6.71px;top:711px;font:normal normal 11.6px/11.6px 'Liberation Sans', sans-serif;color:#444;transform:scaleX(0.9848);">Listo</span>
<span class="t" style="left:69.40px;top:711px;font:normal normal 11.6px/11.6px 'Liberation Sans', sans-serif;color:#444;transform:scaleX(0.9791);">Accesibilidad: es necesario investigar</span>
<div style="left:1066px;top:707px;width:40px;height:21px;background:#c6c6c6;"></div>
<span class="t" style="left:1330.76px;top:711px;font:normal normal 11.6px/11.6px 'Liberation Sans', sans-serif;color:#444;transform:scaleX(0.9281);">100%</span>
<svg width="1366" height="728" viewBox="0 0 1366 728" fill="none"><path d="M54.6,711.4 A5.2,5.2 0 1 0 56,721.4" stroke="#555" stroke-width="1.1" stroke-dasharray="2.6 1.6"/><path d="M56.5,710 v6.4 M54.4,714.4 l2.1,2.1 l2.1,-2.1 M58,715.4 h5 M61,713.4 l2,2 l-2,2" stroke="#555" stroke-width="1.1"/><path d="M57.8,717.2 l7.8,7.4" stroke="#444" stroke-width="1.4"/><path d="M65,718 l-7.4,6.6" stroke="#444" stroke-width="2.2"/><path d="M1079.5,710.5 h12 v12 h-12 z M1079.5,714.5 h12 M1079.5,718.5 h12 M1083.5,710.5 v12 M1087.5,710.5 v12" stroke="#6a6a6a" stroke-width="1"/><rect x="1119.5" y="710.5" width="13" height="12" stroke="#6a6a6a"/><rect x="1122.5" y="712.5" width="7" height="8" stroke="#6a6a6a"/><path d="M1124,714.5 h4 M1124,716.5 h4 M1124,718.5 h4" stroke="#6a6a6a" stroke-width="1"/><path d="M1159.5,710.5 h13 v12 h-13 z M1159.5,717.5 H1167.5 V710.5 M1163.5,710.5 V717.5" stroke="#6a6a6a"/><path d="M1193,716.5 h7 M1205,716.5 h100 M1310,716.5 h8 M1314,712.5 v8" stroke="#555" stroke-width="1"/><rect x="1253" y="712" width="5" height="11" fill="#444"/></svg>
</footer>
</body>
</html>
